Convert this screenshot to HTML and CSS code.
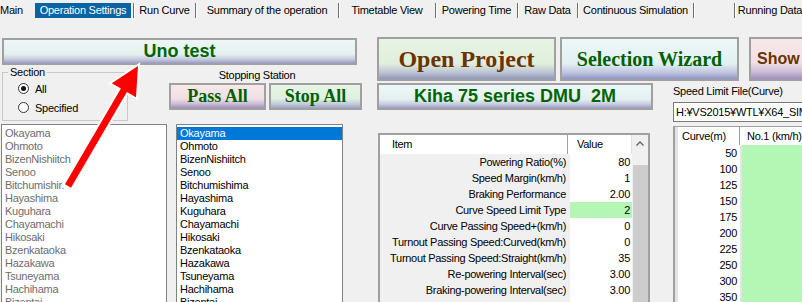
FILE: index.html
```html
<!DOCTYPE html>
<html lang="en">
<head>
  <meta charset="UTF-8">
  <title>Operation Settings</title>
  <link rel="stylesheet" href="styles.css">
</head>
<body>
  <div class="tabs">
    <div class="tab tab-main">Main</div>
    <div class="tab tab-on"><span>Operation Settings</span></div>
    <div class="tab">Run Curve</div>
    <div class="tab">Summary of the operation</div>
    <div class="tab">Timetable View</div>
    <div class="tab">Powering Time</div>
    <div class="tab">Raw Data</div>
    <div class="tab">Continuous Simulation</div>
    <div class="tab"></div>
    <div class="tab tab-last">Running Data</div>
  </div>

  <div class="main">
    <div class="left">
      <div class="gbtn g-cyan uno">Uno test</div>

      <div class="left-mid">
        <fieldset class="section">
          <legend>Section</legend>
          <div class="radio"><span class="dot on"></span>All</div>
          <div class="radio"><span class="dot"></span>Specified</div>
        </fieldset>
        <div class="stopping">
          <div class="stop-label">Stopping Station</div>
          <div class="stop-btns">
            <div class="gbtn g-pink sbtn pass">Pass All</div>
            <div class="gbtn g-green sbtn stop">Stop All</div>
          </div>
        </div>
      </div>

      <div class="lists">
        <div class="list list-a">
          <div>Okayama</div>
          <div>Ohmoto</div>
          <div>BizenNishiitch</div>
          <div>Senoo</div>
          <div>Bitchumishir.</div>
          <div>Hayashima</div>
          <div>Kuguhara</div>
          <div>Chayamachi</div>
          <div>Hikosaki</div>
          <div>Bzenkataoka</div>
          <div>Hazakawa</div>
          <div>Tsuneyama</div>
          <div>Hachihama</div>
          <div>Bizentai</div>
        </div>
        <div class="list list-b">
          <div class="sel">Okayama</div>
          <div>Ohmoto</div>
          <div>BizenNishiitch</div>
          <div>Senoo</div>
          <div>Bitchumishima</div>
          <div>Hayashima</div>
          <div>Kuguhara</div>
          <div>Chayamachi</div>
          <div>Hikosaki</div>
          <div>Bzenkataoka</div>
          <div>Hazakawa</div>
          <div>Tsuneyama</div>
          <div>Hachihama</div>
          <div>Bizentai</div>
        </div>
      </div>
    </div>

    <div class="right">
      <div class="top-btns">
        <div class="gbtn g-green2 open">Open Project</div>
        <div class="gbtn g-cyan2 wizard">Selection Wizard</div>
        <div class="gbtn g-pink show">Show</div>
      </div>

      <div class="lower">
        <div class="pcol">
          <div class="gbtn g-cyan kiha">Kiha 75 series DMU  2M</div>
          <div class="params">
            <div class="ptable">
              <div class="prow phead"><div class="ph-item">Item</div><div class="ph-val">Value</div></div>
              <div class="prow"><div class="pi">Powering Ratio(%)</div><div class="pv">80</div></div>
              <div class="prow"><div class="pi">Speed Margin(km/h)</div><div class="pv">1</div></div>
              <div class="prow"><div class="pi">Braking Performance</div><div class="pv">2.00</div></div>
              <div class="prow"><div class="pi">Curve Speed Limit Type</div><div class="pv pv-green">2</div></div>
              <div class="prow"><div class="pi">Curve Passing Speed+(km/h)</div><div class="pv">0</div></div>
              <div class="prow"><div class="pi">Turnout Passing Speed:Curved(km/h)</div><div class="pv">0</div></div>
              <div class="prow"><div class="pi">Turnout Passing Speed:Straight(km/h)</div><div class="pv">35</div></div>
              <div class="prow"><div class="pi">Re-powering Interval(sec)</div><div class="pv">3.00</div></div>
              <div class="prow"><div class="pi">Braking-powering Interval(sec)</div><div class="pv">3.00</div></div>
              <div class="prow"><div class="pi">Coast Notch(km/h)</div><div class="pv">10</div></div>
            </div>
            <div class="pscroll">
              <div class="sb-up">
                <svg width="8" height="5" viewBox="0 0 8 5"><polyline points="0.5,4.5 4,1 7.5,4.5" fill="none" stroke="#606060" stroke-width="1.3"/></svg>
              </div>
              <div class="sb-track"></div>
              <div class="sb-thumb"></div>
            </div>
          </div>
        </div>

        <div class="ccol">
          <div class="cl-label">Speed Limit File(Curve)</div>
          <div class="path">H:¥VS2015¥WTL¥X64_SIM¥Curve.csv</div>
          <div class="curve">
            <div class="crow chead"><div class="ch1">Curve(m)</div><div class="ch2">No.1 (km/h)</div></div>
            <div class="crow"><div class="c1">50</div><div class="c2"></div></div>
            <div class="crow"><div class="c1">100</div><div class="c2"></div></div>
            <div class="crow"><div class="c1">125</div><div class="c2"></div></div>
            <div class="crow"><div class="c1">150</div><div class="c2"></div></div>
            <div class="crow"><div class="c1">175</div><div class="c2"></div></div>
            <div class="crow"><div class="c1">200</div><div class="c2"></div></div>
            <div class="crow"><div class="c1">225</div><div class="c2"></div></div>
            <div class="crow"><div class="c1">250</div><div class="c2"></div></div>
            <div class="crow"><div class="c1">300</div><div class="c2"></div></div>
            <div class="crow"><div class="c1">350</div><div class="c2"></div></div>
          </div>
        </div>
      </div>
    </div>
  </div>

  <svg class="arrow" width="802" height="302" viewBox="0 0 802 302">
    <polygon points="65,184.2 120.9,88.4 111.8,83.2 138,66 136,97.3 126.9,92 71,187.8"
      fill="#ff0000" stroke="#ffffff" stroke-width="4" stroke-linejoin="miter" paint-order="stroke"/>
  </svg>
</body>
</html>
```

FILE: styles.css
```css
* {
  box-sizing: border-box;
}
body {
  margin: 0;
  width: 802px;
  height: 302px;
  overflow: hidden;
  position: relative;
  background: #f0f0f0;
  font-family: "Liberation Sans", Arial, sans-serif;
  font-size: 11px;
  letter-spacing: -0.25px;
  color: #000;
}

/* tab strip */
.tabs {
  display: grid;
  grid-template-columns: 35px 99px 62px 143px 97px 82px 60px 116px 41px 70px;
  height: 18px;
  padding-top: 3px;
}
.tab {
  height: 15px;
  line-height: 15px;
  text-align: center;
  white-space: nowrap;
  overflow: hidden;
  border-right: 1px solid #6e6e6e;
  box-shadow: 1px 0 0 #ffffff;
}
.tab-main {
  text-align: left;
  border-right: none;
  box-shadow: none;
}
.tab-on span {
  display: block;
  width: 96px;
  background: #0a64a4;
  color: #fff;
}
.tab-last {
  border-right: none;
  box-shadow: none;
}

.main {
  display: flex;
  align-items: flex-start;
  margin-top: 19px;
}

/* gradient buttons */
.gbtn {
  flex: none;
  border: 2px solid #a0a0a0;
  text-align: center;
  font-weight: bold;
  letter-spacing: 0;
  white-space: nowrap;
  overflow: hidden;
}
.g-cyan {
  background: linear-gradient(#eef7f7, #e4f0f0 62%, #c6cadf 84%, #9a9dc9);
}
.g-cyan2 {
  background: linear-gradient(#ecf7f8, #e3f0f2 62%, #bfc4df 84%, #8f96c8);
}
.g-pink {
  background: linear-gradient(#f8e8ea, #f0e0e3 60%, #cbbdd6 82%, #a08ec0);
}
.g-green {
  background: linear-gradient(#e8f5e6, #e0efde 60%, #c0c8da 84%, #9ca4c8);
}
.g-green2 {
  background: linear-gradient(#e8f4e4, #e0eedc 62%, #bcc3d4 84%, #9098b8);
}

/* left side */
.left {
  width: 366px;
  flex: none;
}
.uno {
  margin: 1px 0 0 2px;
  width: 355px;
  height: 27px;
  line-height: 23px;
  font-size: 18px;
  color: #006400;
}
.left-mid {
  display: flex;
  margin-top: 1px;
}
.section {
  margin: 0 0 0 2px;
  padding: 0;
  width: 126px;
  height: 55px;
  min-width: 0;
  border: 1px solid #c8c8c8;
}
.section legend {
  margin-left: 5px;
  padding: 0 2px;
  line-height: 13px;
}
.radio {
  display: flex;
  align-items: center;
  height: 19px;
  padding-left: 15px;
}
.dot {
  position: relative;
  width: 11px;
  height: 11px;
  margin-right: 6px;
  border: 1px solid #333;
  border-radius: 50%;
  background: #fff;
}
.dot.on::after {
  content: "";
  position: absolute;
  left: 2px;
  top: 2px;
  width: 5px;
  height: 5px;
  border-radius: 50%;
  background: #111;
}
.stopping {
  margin-left: 41px;
  width: 193px;
}
.stop-label {
  margin-top: 3px;
  line-height: 13px;
  padding-right: 17px;
  text-align: center;
  white-space: nowrap;
}
.stop-btns {
  display: flex;
  gap: 3px;
  margin-top: 1px;
}
.sbtn {
  height: 27px;
  line-height: 23px;
  font-family: "Liberation Serif", "Times New Roman", serif;
  font-size: 18px;
  color: #006000;
}
.pass {
  width: 97px;
}
.stop {
  width: 93px;
}

.lists {
  display: flex;
  margin-top: 3px;
}
.list {
  height: 190px;
  padding-top: 2px;
  border: 1px solid #828282;
  background: #fff;
  overflow: hidden;
}
.list div {
  height: 13px;
  line-height: 13px;
  padding-left: 3px;
  white-space: nowrap;
}
.list-a {
  margin-left: 1px;
  width: 166px;
  color: #6d6d6d;
}
.list-b {
  margin-left: 9px;
  width: 167px;
}
.list .sel {
  background: #0078d7;
  color: #fff;
}

/* right side */
.right {
  flex: none;
  margin-left: 11px;
  width: 425px;
}
.top-btns {
  display: flex;
  height: 44px;
}
.open {
  width: 179px;
  line-height: 40px;
  font-family: "Liberation Serif", "Times New Roman", serif;
  font-size: 24px;
  color: #6a3300;
}
.wizard {
  margin-left: 4px;
  width: 179px;
  line-height: 40px;
  font-family: "Liberation Serif", "Times New Roman", serif;
  font-size: 20px;
  color: #006000;
}
.show {
  margin-left: 10px;
  width: 100px;
  padding-left: 6px;
  line-height: 40px;
  text-align: left;
  font-size: 16px;
  color: #6a3300;
}

.lower {
  display: flex;
  margin-top: 2px;
}
.pcol {
  flex: none;
  width: 276px;
}
.kiha {
  width: 276px;
  height: 27px;
  line-height: 23px;
  font-size: 18px;
  color: #006400;
  white-space: pre;
}

.params {
  display: flex;
  margin: 23px 0 0 1px;
  width: 272px;
  height: 200px;
  border: 2px solid #a0a0a0;
  overflow: hidden;
}
.ptable {
  width: 252px;
  letter-spacing: -0.3px;
}
.prow {
  display: grid;
  grid-template-columns: 188px 64px;
  height: 16px;
  line-height: 16px;
}
.prow div {
  white-space: nowrap;
}
.phead {
  height: 19px;
  line-height: 19px;
  background: #fff;
}
.ph-item {
  padding-left: 12px;
  border-right: 1px solid #a0a0a0;
}
.ph-val {
  padding-left: 9px;
  border-right: 1px solid #e0e0e0;
}
.pi {
  padding-right: 2px;
  text-align: right;
  overflow: hidden;
}
.pv {
  margin-left: 2px;
  padding-right: 2px;
  text-align: right;
  background: #fff;
  border-bottom: 1px solid #e8e8e8;
}
.pv-green {
  background: #b4f7b4;
}
.pscroll {
  display: flex;
  flex-direction: column;
  width: 16px;
}
.sb-up {
  display: flex;
  align-items: center;
  justify-content: center;
  height: 17px;
}
.sb-track {
  height: 13px;
}
.sb-thumb {
  flex: 1;
  margin-left: 1px;
  background: #cdcdcd;
}

.ccol {
  flex: none;
  margin-left: 20px;
  width: 129px;
}
.cl-label {
  margin-top: 2px;
  line-height: 13px;
  white-space: nowrap;
}
.path {
  margin-top: 4px;
  width: 140px;
  height: 20px;
  padding-left: 2px;
  line-height: 18px;
  border: 1px solid #7a7a7a;
  background: #fff;
  white-space: nowrap;
  overflow: hidden;
}
.curve {
  margin-top: 4px;
  width: 140px;
  border-top: 1px solid #a0a0a0;
  border-left: 2px solid #a0a0a0;
  padding-left: 3px;
  background: #e4e4e4;
}
.crow {
  display: grid;
  grid-template-columns: 62px 1fr;
  height: 16px;
  line-height: 16px;
}
.chead {
  height: 18px;
  line-height: 18px;
  background: #fff;
}
.ch1 {
  padding-left: 4px;
  border-right: 1px solid #a0a0a0;
  white-space: nowrap;
}
.ch2 {
  padding-left: 7px;
  white-space: nowrap;
}
.c1 {
  padding-right: 3px;
  text-align: right;
  background: #fff;
  border-bottom: 1px solid #ececec;
}
.c2 {
  margin-left: 2px;
  background: #b4f7b4;
  border-bottom: 1px solid #c8f8c8;
}

.arrow {
  position: absolute;
  left: 0;
  top: 0;
  pointer-events: none;
}
```
